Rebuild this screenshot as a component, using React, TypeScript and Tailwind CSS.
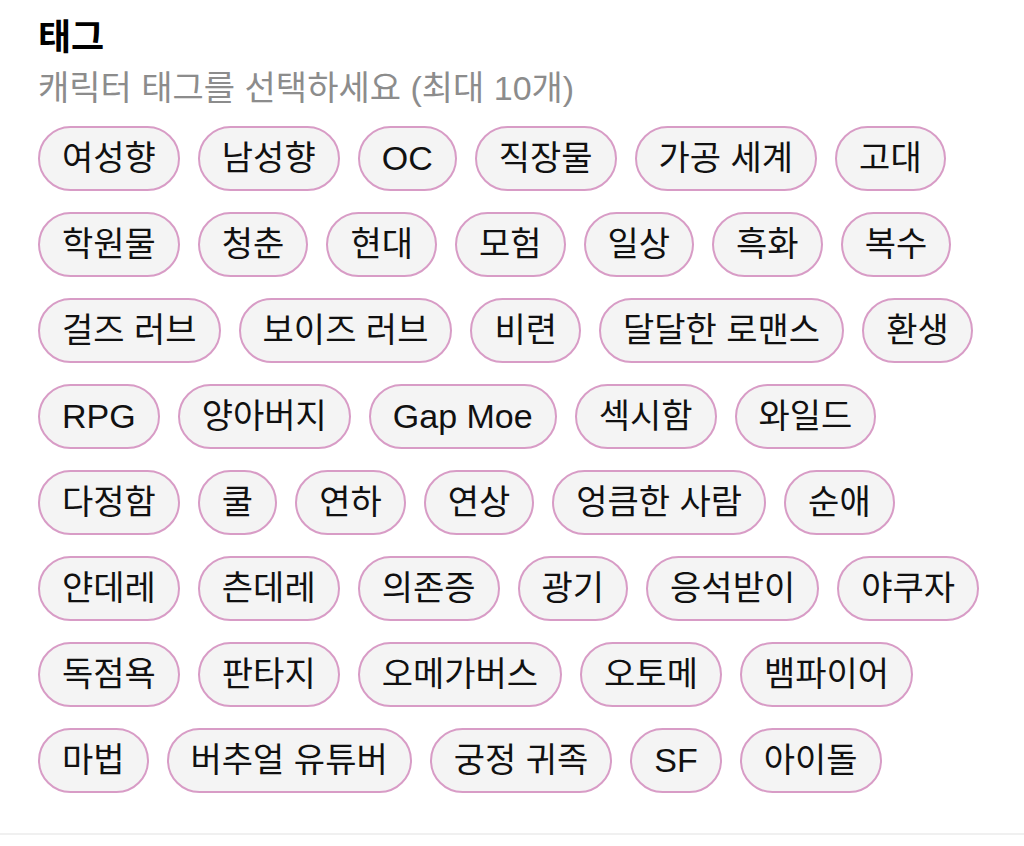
const tags = [
  "여성향", "남성향", "OC", "직장물", "가공 세계", "고대",
  "학원물", "청춘", "현대", "모험", "일상", "흑화", "복수",
  "걸즈 러브", "보이즈 러브", "비련", "달달한 로맨스", "환생",
  "RPG", "양아버지", "Gap Moe", "섹시함", "와일드",
  "다정함", "쿨", "연하", "연상", "엉큼한 사람", "순애",
  "얀데레", "츤데레", "의존증", "광기", "응석받이", "야쿠자",
  "독점욕", "판타지", "오메가버스", "오토메", "뱀파이어",
  "마법", "버추얼 유튜버", "궁정 귀족", "SF", "아이돌",
];

export default function App() {
  return (
    <main
      className="h-[846px] w-[1024px] overflow-hidden bg-white"
      style={{ fontFamily: '"Liberation Sans", "Noto Sans CJK KR", sans-serif' }}
    >
      <section className="border-b-2 border-[#f0f0f0] px-[38px] pt-[14px] pb-[40px]">
        <h2 className="text-[36px] font-bold leading-[48px] text-black">태그</h2>
        <p className="mt-[4px] text-[34px] leading-[44px] text-[#8c8c8c]">
          캐릭터 태그를 선택하세요 (최대 10개)
        </p>
        <div className="mt-[16px] flex flex-wrap gap-x-[18px] gap-y-[21px]">
          {tags.map((tag) => (
            <button
              key={tag}
              className="flex h-[65px] items-center rounded-full border-2 border-[#d89cc6] bg-[#f4f4f4] px-[22px] text-[34px] text-[#111]"
            >
              {tag}
            </button>
          ))}
        </div>
      </section>
    </main>
  );
}
